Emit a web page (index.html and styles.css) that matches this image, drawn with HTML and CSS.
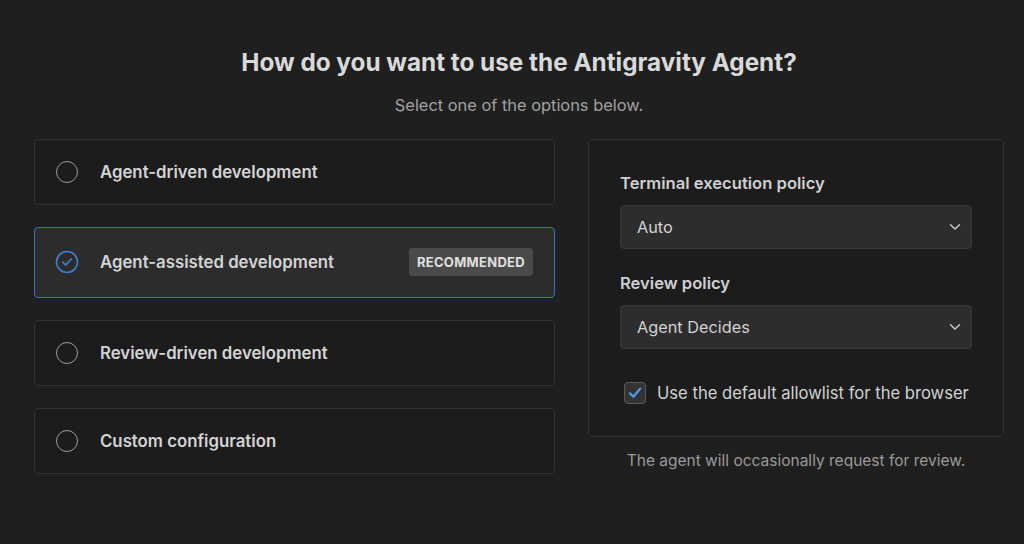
FILE: index.html
```html
<!DOCTYPE html>
<html lang="en">
<head>
    <meta charset="UTF-8">
    <meta name="viewport" content="width=device-width, initial-scale=1.0">
    <title>Antigravity Agent Setup</title>
    <link rel="stylesheet" href="styles.css">
</head>
<body>
    <div class="page">
        <h1>How do you want to use the Antigravity Agent?</h1>
        <p class="subtitle">Select one of the options below.</p>

        <div class="layout">
            <div class="options">
                <div class="option">
                    <span class="radio"></span>
                    <span class="option-label">Agent-driven development</span>
                </div>
                <div class="option selected">
                    <svg class="radio-check" width="24" height="24" viewBox="0 0 24 24">
                        <circle cx="12" cy="12" r="10.5" fill="none" stroke="#3d7fd0" stroke-width="1.6"/>
                        <path d="M7.8 12.2 L10.6 15 L16.2 9.2" fill="none" stroke="#3d7fd0" stroke-width="1.7" stroke-linecap="round" stroke-linejoin="round"/>
                    </svg>
                    <span class="option-label">Agent-assisted development</span>
                    <span class="badge">RECOMMENDED</span>
                </div>
                <div class="option">
                    <span class="radio"></span>
                    <span class="option-label">Review-driven development</span>
                </div>
                <div class="option">
                    <span class="radio"></span>
                    <span class="option-label">Custom configuration</span>
                </div>
            </div>

            <div class="settings-col">
                <div class="settings">
                    <label class="field-label">Terminal execution policy</label>
                    <div class="select">
                        <span>Auto</span>
                        <svg width="12" height="8" viewBox="0 0 12 8">
                            <path d="M1.5 1.8 L6 6 L10.5 1.8" fill="none" stroke="#cfcfcf" stroke-width="1.4" stroke-linecap="round" stroke-linejoin="round"/>
                        </svg>
                    </div>

                    <label class="field-label second">Review policy</label>
                    <div class="select">
                        <span>Agent Decides</span>
                        <svg width="12" height="8" viewBox="0 0 12 8">
                            <path d="M1.5 1.8 L6 6 L10.5 1.8" fill="none" stroke="#cfcfcf" stroke-width="1.4" stroke-linecap="round" stroke-linejoin="round"/>
                        </svg>
                    </div>

                    <div class="check-row">
                        <span class="checkbox">
                            <svg width="16" height="16" viewBox="0 0 16 16">
                                <path d="M3 8.4 L6.4 11.8 L13.2 3.6" fill="none" stroke="#4d9ef0" stroke-width="2.2" stroke-linecap="round" stroke-linejoin="round"/>
                            </svg>
                        </span>
                        <span>Use the default allowlist for the browser</span>
                    </div>
                </div>
                <p class="hint">The agent will occasionally request for review.</p>
            </div>
        </div>
    </div>
</body>
</html>
```

FILE: styles.css
```css
body {
    margin: 0;
    background-color: #1f1f1f;
    font-family: Inter, "Noto Sans", sans-serif;
    color: #d6d6d6;
}
.page {
    width: 970px;
    padding: 47px 20px 0 34px;
}
h1 {
    margin: 0;
    font-size: 24.3px;
    line-height: 30px;
    font-weight: 700;
    color: #d9d9d9;
    text-align: center;
}
.subtitle {
    margin: 18px 0 0;
    font-size: 16.4px;
    line-height: 20px;
    color: #a2a2a2;
    text-align: center;
}
.layout {
    display: grid;
    grid-template-columns: 521px 416px;
    column-gap: 33px;
    margin-top: 24px;
    align-items: start;
}
.options {
    display: flex;
    flex-direction: column;
    gap: 22px;
}
.option {
    display: flex;
    align-items: center;
    gap: 22px;
    padding: 20px 21px;
    border: 1px solid #323232;
    border-radius: 4px;
    background-color: #1c1c1c;
}
.option.selected {
    background-color: #2c2c2c;
    border-color: #3a72b8;
    padding: 20px 21px 21px 20px;
}
.radio {
    width: 20px;
    height: 20px;
    border: 1px solid #9a9a9a;
    border-radius: 50%;
    flex-shrink: 0;
}
.radio-check {
    flex-shrink: 0;
    margin-right: -1px;
}
.option-label {
    flex: 1;
    font-size: 16.8px;
    font-weight: 600;
    line-height: 24px;
    color: #d4d4d4;
}
.badge {
    height: 28px;
    line-height: 28px;
    padding: 0 8px;
    background-color: #4a4a4a;
    border-radius: 3px;
    font-size: 13px;
    font-weight: 700;
    letter-spacing: 0.3px;
    color: #e0e0e0;
}
.settings {
    border: 1px solid #333;
    border-radius: 5px;
    background-color: #1c1c1c;
    padding: 32px 31px 32px 31px;
}
.field-label {
    display: block;
    font-size: 16.6px;
    font-weight: 600;
    line-height: 22px;
    color: #cfcfcf;
    margin-bottom: 11px;
}
.field-label.second {
    margin-top: 23px;
}
.select {
    display: flex;
    justify-content: space-between;
    align-items: center;
    height: 44px;
    box-sizing: border-box;
    padding: 0 10px 0 16px;
    background-color: #2d2d2d;
    border: 1px solid #383838;
    border-radius: 4px;
    font-size: 16.3px;
    color: #d2d2d2;
}
.check-row {
    display: flex;
    align-items: center;
    gap: 11px;
    margin-top: 33px;
    padding-left: 4px;
    font-size: 16.6px;
    color: #d2d2d2;
}
.checkbox {
    width: 20px;
    height: 20px;
    display: flex;
    align-items: center;
    justify-content: center;
    border: 1px solid #5a5a5a;
    border-radius: 4px;
    background-color: #333;
}
.hint {
    margin: 14px 0 0;
    font-size: 15.5px;
    line-height: 20px;
    color: #9a9a9a;
    text-align: center;
}
```
